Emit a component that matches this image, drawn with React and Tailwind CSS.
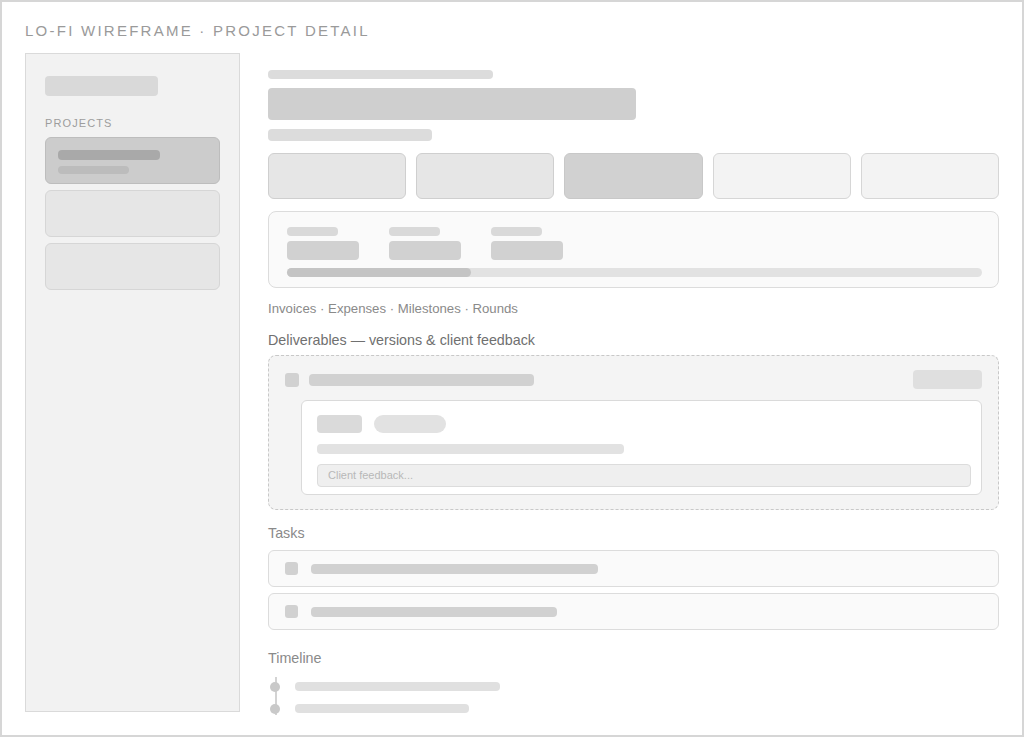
import React from "react";

const font = { fontFamily: '"Liberation Sans", Arial, sans-serif' };

const StatCard = ({ tone }) => {
  const tones = {
    mid: "bg-[#e6e6e6] border-[#cfcfcf]",
    dark: "bg-[#d1d1d1] border-[#c8c8c8]",
    light: "bg-[#f3f3f3] border-[#d6d6d6]",
  };
  return <div className={`h-[46px] flex-1 rounded-md border ${tones[tone]}`} />;
};

const Metric = () => (
  <div className="flex w-[72px] flex-col gap-[5px]">
    <div className="h-[9px] w-[51px] rounded-sm bg-[#d9d9d9]" />
    <div className="h-[19px] w-[72px] rounded bg-[#d1d1d1]" />
  </div>
);

const TaskRow = ({ width }) => (
  <div className="flex h-[37px] items-center gap-[13px] rounded-md border border-[#dcdcdc] bg-[#fafafa] px-[16px]">
    <div className="h-[13px] w-[13px] rounded-[3px] bg-[#d1d1d1]" />
    <div className={`h-[10px] rounded-sm bg-[#d1d1d1] ${width}`} />
  </div>
);

export default function App() {
  return (
    <div
      style={font}
      className="h-[737px] w-[1024px] border-2 border-[#d6d6d6] bg-white px-[23px] pt-[19px] text-[#999]"
    >
      <div className="h-[20px] text-[15px] leading-[20px] tracking-[0.15em] text-[#9a9a9a]">
        LO-FI WIREFRAME · PROJECT DETAIL
      </div>

      <div className="mt-[12px] flex items-start gap-[28px]">
        {/* Sidebar */}
        <aside className="h-[659px] w-[215px] shrink-0 border border-[#dadada] bg-[#f2f2f2] px-[19px] pt-[22px]">
          <div className="h-[20px] w-[113px] rounded bg-[#d9d9d9]" />
          <div className="mt-[19px] text-[11px] leading-[16px] tracking-[0.1em] text-[#9d9d9d]">
            PROJECTS
          </div>
          <div className="mt-[6px] flex flex-col gap-[6px]">
            <div className="h-[47px] rounded-md border border-[#bdbdbd] bg-[#cccccc] px-[12px] pt-[12px]">
              <div className="h-[10px] w-[102px] rounded-sm bg-[#a9a9a9]" />
              <div className="mt-[6px] h-[8px] w-[71px] rounded-sm bg-[#bcbcbc]" />
            </div>
            <div className="h-[47px] rounded-md border border-[#d6d6d6] bg-[#e6e6e6]" />
            <div className="h-[47px] rounded-md border border-[#d6d6d6] bg-[#e6e6e6]" />
          </div>
        </aside>

        {/* Main */}
        <main className="flex-1 pt-[17px]">
          <div className="h-[9px] w-[225px] rounded-sm bg-[#dcdcdc]" />
          <div className="mt-[9px] h-[32px] w-[368px] rounded bg-[#cfcfcf]" />
          <div className="mt-[9px] h-[12px] w-[164px] rounded-sm bg-[#dcdcdc]" />

          <div className="mt-[12px] flex gap-[10px]">
            <StatCard tone="mid" />
            <StatCard tone="mid" />
            <StatCard tone="dark" />
            <StatCard tone="light" />
            <StatCard tone="light" />
          </div>

          <div className="mt-[12px] h-[77px] rounded-lg border border-[#dcdcdc] bg-[#fafafa] pl-[18px] pr-[16px] pt-[15px]">
            <div className="flex gap-[30px]">
              <Metric />
              <Metric />
              <Metric />
            </div>
            <div className="mt-[8px] h-[9px] rounded-full bg-[#e2e2e2]">
              <div className="h-full w-[184px] rounded-full bg-[#c4c4c4]" />
            </div>
          </div>

          <div className="mt-[12px] text-[13.2px] leading-[18px] text-[#8a8a8a]">
            Invoices · Expenses · Milestones · Rounds
          </div>

          <div className="mt-[13px] text-[14.3px] leading-[18px] text-[#707070]">
            Deliverables — versions &amp; client feedback
          </div>

          <div className="mt-[6px] rounded-lg border border-dashed border-[#c8c8c8] bg-[#f4f4f4] px-[16px] pb-[14px] pt-[14px]">
            <div className="flex h-[19px] items-center">
              <div className="h-[14px] w-[14px] rounded-[3px] bg-[#d1d1d1]" />
              <div className="ml-[10px] h-[12px] w-[225px] rounded-sm bg-[#d1d1d1]" />
              <div className="ml-auto h-[19px] w-[69px] rounded bg-[#dfdfdf]" />
            </div>
            <div className="ml-[16px] mt-[11px] rounded-md border border-[#dadada] bg-white pb-[7px] pl-[15px] pr-[10px] pt-[14px]">
              <div className="flex gap-[12px]">
                <div className="h-[18px] w-[45px] rounded bg-[#dadada]" />
                <div className="h-[18px] w-[72px] rounded-full bg-[#e2e2e2]" />
              </div>
              <div className="mt-[11px] h-[10px] w-[307px] rounded-sm bg-[#e2e2e2]" />
              <div className="mt-[10px] flex h-[23px] items-center rounded border border-[#dcdcdc] bg-[#efefef] px-[10px] text-[11px] text-[#b8b8b8]">
                Client feedback...
              </div>
            </div>
          </div>

          <div className="mt-[14px] text-[14.3px] leading-[18px] text-[#8a8a8a]">Tasks</div>

          <div className="mt-[8px] flex flex-col gap-[6px]">
            <TaskRow width="w-[287px]" />
            <TaskRow width="w-[246px]" />
          </div>

          <div className="mt-[19px] text-[14.3px] leading-[18px] text-[#8a8a8a]">Timeline</div>

          <div className="relative mt-[10px] flex flex-col gap-[13px] pl-[27px] pt-[5px]">
            <div className="absolute left-[7px] top-0 h-[38px] w-[2px] bg-[#d3d3d3]" />
            <div className="relative flex items-center">
              <div className="absolute -left-[25px] h-[10px] w-[10px] rounded-full bg-[#c9c9c9]" />
              <div className="h-[9px] w-[205px] rounded-sm bg-[#e0e0e0]" />
            </div>
            <div className="relative flex items-center">
              <div className="absolute -left-[25px] h-[10px] w-[10px] rounded-full bg-[#c9c9c9]" />
              <div className="h-[9px] w-[174px] rounded-sm bg-[#e0e0e0]" />
            </div>
          </div>
        </main>
      </div>
    </div>
  );
}
